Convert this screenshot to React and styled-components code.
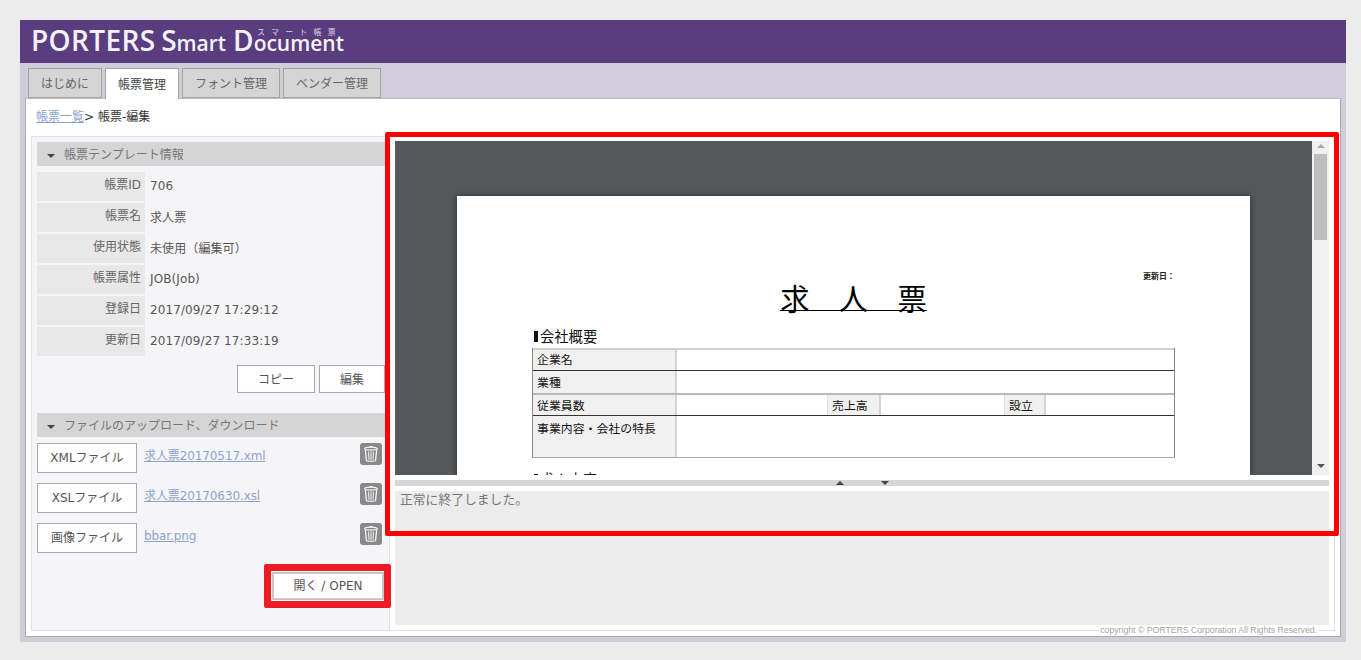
import React from "react";
import styled, { createGlobalStyle } from "styled-components";

const Global = createGlobalStyle`
  html, body { margin: 0; padding: 0; background: #ececec; }
  body { font-family: "DejaVu Sans", "Noto Sans CJK JP", sans-serif; font-size: 12px; color: #555; }
  * { box-sizing: border-box; }
`;

const Frame = styled.div`
  position: relative;
  width: 1326px;
  height: 622px;
  margin: 20px 15px 18px 20px;
  background: #d1ccd9;
  display: flex;
  flex-direction: column;
`;
const Header = styled.header`
  height: 43px;
  background: #5a3d7e;
  flex: none;
  display: flex;
  align-items: center;
  padding-left: 11px;
`;
const Logo = styled.div`
  position: relative;
  font-family: "Open Sans", sans-serif;
  font-weight: 600;
  color: #f4f2f7;
  font-size: 21px;
  line-height: 43px;
  white-space: nowrap;
  padding-top: 1px;
`;
const Cap = styled.span`
  font-size: 28px;
  letter-spacing: ${(p) => p.$ls || "0"};
  margin-left: ${(p) => p.$ml || 0}px;
`;
const LogoKana = styled.span`
  position: absolute;
  left: 226px;
  top: 8px;
  font-family: "Noto Sans CJK JP", sans-serif;
  font-size: 8px;
  font-weight: 400;
  line-height: 12px;
  letter-spacing: 6.2px;
  color: #d9d2e4;
`;
const TabBar = styled.nav`
  height: 35px;
  flex: none;
  display: flex;
  gap: 3px;
  padding: 5px 0 0 8px;
  position: relative;
  z-index: 1;
`;
const Tab = styled.div`
  width: ${(p) => p.$w}px;
  height: ${(p) => (p.$active ? 31 : 30)}px;
  display: flex;
  align-items: center;
  justify-content: center;
  padding-bottom: 2px;
  background: ${(p) => (p.$active ? "#fff" : "#d5d5d5")};
  border: 1px solid #a3a3a3;
  border-bottom: ${(p) => (p.$active ? "none" : "1px solid #a3a3a3")};
  color: ${(p) => (p.$active ? "#444" : "#666")};
`;
const Content = styled.main`
  margin: 0 5px;
  height: 539px;
  flex: none;
  background: #fff;
  border: 1px solid #aaa;
  border-top-color: #bbb;
  padding: 0 5px;
`;
const Crumb = styled.div`
  height: 37px;
  padding: 9px 0 0 5px;
  line-height: 18px;
  color: #333;
`;
const CrumbLink = styled.a`
  color: #8da3cf;
  text-decoration: underline;
`;
const Panel = styled.div`
  position: relative;
  width: 1304px;
  height: 495px;
  border: 1px solid #e0e0e8;
  display: flex;
`;
const LeftPane = styled.aside`
  width: 358px;
  flex: none;
  background: #f5f5f8;
  border-right: 1px solid #dedee4;
  padding: 5px 4px 0 5px;
  display: flex;
  flex-direction: column;
`;
const SectionHead = styled.div`
  height: 24px;
  width: 348px;
  flex: none;
  background: #d5d5d5;
  display: flex;
  align-items: center;
  color: #777;
  padding: 0 0 2px 9px;
  margin-top: ${(p) => p.$mt || 0}px;
`;
const Caret = styled.span`
  width: 0;
  height: 0;
  border-left: 4px solid transparent;
  border-right: 4px solid transparent;
  border-top: 4px solid #444;
  margin: 5px 9px 0 1px;
`;
const InfoList = styled.div`
  margin-top: 6px;
  display: flex;
  flex-direction: column;
  gap: 2px;
`;
const InfoRow = styled.div`
  height: 29px;
  display: flex;
  align-items: center;
`;
const InfoLabel = styled.div`
  width: 108px;
  height: 100%;
  background: #e8e8e8;
  text-align: right;
  padding-right: 4px;
  line-height: 27px;
  color: #666;
`;
const InfoValue = styled.div`
  padding: 0 0 2px 5px;
  color: #555;
  letter-spacing: 0.1px;
  white-space: nowrap;
`;
const Actions = styled.div`
  width: 348px;
  display: flex;
  justify-content: flex-end;
  gap: 4px;
  margin-top: 9px;
`;
const Btn = styled.button`
  width: ${(p) => p.$w}px;
  height: ${(p) => p.$h || 28}px;
  padding: 0 0 ${(p) => p.$pb || 2}px;
  background: #fff;
  border: 1px solid #aaa;
  font: inherit;
  color: #555;
`;
const FileRow = styled.div`
  width: 348px;
  height: 30px;
  display: flex;
  align-items: flex-start;
  margin-top: ${(p) => p.$mt}px;
`;
const FileLink = styled.a`
  margin-left: 7px;
  flex: 1;
  line-height: 26px;
  letter-spacing: -0.1px;
  color: #8da3cf;
  text-decoration: underline;
  white-space: nowrap;
`;
const TrashBtn = styled.div`
  width: 22px;
  height: 22px;
  margin-right: 3px;
  border-radius: 3px;
  background: #8a8a8a;
  display: flex;
  align-items: center;
  justify-content: center;
`;
const OpenRow = styled.div`
  width: 347px;
  display: flex;
  justify-content: flex-end;
  margin-top: 19px;
`;
const OpenBtn = styled.button`
  width: 112px;
  height: 28px;
  padding: 0 0 3px;
  background: #fff;
  border: 1px solid #c4c4c4;
  outline: 1px solid #ccc;
  outline-offset: -2px;
  font: inherit;
  color: #555;
`;
const RightPane = styled.section`
  flex: 1;
  min-width: 0;
  padding: 4px 0 0 5px;
  display: flex;
  flex-direction: column;
`;
const Viewer = styled.div`
  width: 934px;
  height: 334px;
  flex: none;
  display: flex;
  overflow: hidden;
`;
const Stage = styled.div`
  width: 917px;
  background: #54585b;
  padding: 55px 62px 0;
  overflow: hidden;
`;
const Sheet = styled.div`
  width: 793px;
  height: 600px;
  background: #fff;
  box-shadow: 0 0 6px rgba(0, 0, 0, 0.45);
  padding: 74px 75px 0;
  color: #111;
  font-family: "Noto Sans CJK JP", sans-serif;
`;
const SheetDate = styled.div`
  text-align: right;
  font-size: 8px;
  font-weight: 700;
  line-height: 12px;
  color: #222;
`;
const TitleWrap = styled.div`
  text-align: center;
  height: 44px;
`;
const SheetTitle = styled.h1`
  display: inline-block;
  margin: -2px 0 0;
  font-size: 29.3px;
  font-weight: 400;
  line-height: 34px;
  height: 31px;
  border-bottom: 1px solid #000;
  color: #000;
`;
const SheetHeading = styled.div`
  display: flex;
  align-items: center;
  font-size: 14.3px;
  line-height: 20px;
  height: 20px;
  margin: ${(p) => p.$mt}px 0 2px 2px;
  color: #111;
`;
const HeadBar = styled.span`
  width: 4px;
  height: 11px;
  background: #111;
  margin-right: 2px;
`;
const SheetTable = styled.div`
  width: 643px;
  border-left: 1px solid #888;
  border-right: 1px solid #888;
  border-bottom: 1px solid #aaa;
`;
const SheetRow = styled.div`
  display: flex;
  height: ${(p) => p.$h}px;
  border-top: ${(p) => p.$t || 1}px solid ${(p) => p.$line};
`;
const SheetLabel = styled.div`
  width: ${(p) => p.$w}px;
  flex: none;
  background: #f0f0f0;
  border-right: 2px solid #d4d4d4;
  border-left: ${(p) => (p.$inner ? "1px solid #ddd" : "none")};
  padding: ${(p) => p.$pt || 0}px 0 0 4px;
  font-size: 11.9px;
  line-height: ${(p) => p.$lh || 21}px;
  color: #111;
  white-space: nowrap;
`;
const SheetCell = styled.div`
  width: ${(p) => (p.$w ? `${p.$w}px` : "auto")};
  flex: ${(p) => (p.$w ? "none" : "1")};
`;
const ScrollTrack = styled.div`
  width: 17px;
  flex: none;
  background: #f0f0f0;
  display: flex;
  flex-direction: column;
  align-items: center;
  padding-top: 3px;
`;
const Thumb = styled.div`
  width: 13px;
  height: 86px;
  background: #bebebe;
  margin-top: 6px;
`;
const Arrow = styled.span`
  width: 0;
  height: 0;
  border-left: 4px solid transparent;
  border-right: 4px solid transparent;
  ${(p) => (p.$up ? `border-bottom: 4px solid ${p.$c};` : `border-top: 4px solid ${p.$c};`)}
`;
const ScrollDown = styled(Arrow)`
  margin-top: auto;
  margin-bottom: 7px;
`;
const Splitter = styled.div`
  width: 934px;
  height: 6px;
  margin-top: 5px;
  flex: none;
  background: #d6d6d6;
  display: flex;
  align-items: flex-start;
  padding: 1px 0 0 441px;
  gap: 37px;
`;
const Message = styled.div`
  width: 934px;
  height: 134px;
  margin-top: 5px;
  flex: none;
  background: #ececec;
  padding: 0 0 0 5px;
  font-size: 12.8px;
  line-height: 18px;
  color: #777;
`;
const Copyright = styled.div`
  position: absolute;
  right: 16px;
  bottom: -5px;
  background: #fff;
  padding: 0 1px;
  font-family: "Liberation Sans", sans-serif;
  font-size: 8.7px;
  line-height: 10px;
  color: #a5a5a5;
  white-space: nowrap;
`;
const Highlight = styled.div`
  position: absolute;
  left: ${(p) => p.$x}px;
  top: ${(p) => p.$y}px;
  width: ${(p) => p.$w}px;
  height: ${(p) => p.$h}px;
  border: ${(p) => p.$b}px solid ${(p) => p.$c};
  border-radius: 2px;
  pointer-events: none;
`;

const TrashIcon = () => (
  <svg width="16" height="18" viewBox="0 0 16 18" fill="none" stroke="#f2f2f2" strokeLinecap="round">
    <path d="M6 2.2C6 1 10 1 10 2.2" strokeWidth="1" />
    <ellipse cx="8" cy="3.6" rx="6.3" ry="1.5" strokeWidth="1.3" />
    <path d="M2.4 5.4L3.4 15.4C3.6 16.6 12.4 16.6 12.6 15.4L13.6 5.4" strokeWidth="1.3" />
    <path d="M5.6 7L6 14.5M8 7V14.6M10.4 7L10 14.5" strokeWidth="1" />
  </svg>
);

const info = [
  ["帳票ID", "706"],
  ["帳票名", "求人票"],
  ["使用状態", "未使用（編集可）"],
  ["帳票属性", "JOB(Job)"],
  ["登録日", "2017/09/27 17:29:12"],
  ["更新日", "2017/09/27 17:33:19"],
];
const files = [
  ["XMLファイル", "求人票20170517.xml", 6],
  ["XSLファイル", "求人票20170630.xsl", 10],
  ["画像ファイル", "bbar.png", 10],
];

export default function App() {
  return (
    <>
      <Global />
      <Frame>
        <Header>
          <Logo>
            <Cap $ls="0.4px">PORTERS</Cap> <Cap>S</Cap>mart <Cap $ml={1.5}>D</Cap>ocument
            <LogoKana>スマート帳票</LogoKana>
          </Logo>
        </Header>
        <TabBar>
          <Tab $w={74}>はじめに</Tab>
          <Tab $w={74} $active>帳票管理</Tab>
          <Tab $w={98}>フォント管理</Tab>
          <Tab $w={98}>ベンダー管理</Tab>
        </TabBar>
        <Content>
          <Crumb>
            <CrumbLink>帳票一覧</CrumbLink>&gt; 帳票-編集
          </Crumb>
          <Panel>
            <LeftPane>
              <SectionHead><Caret />帳票テンプレート情報</SectionHead>
              <InfoList>
                {info.map(([k, v]) => (
                  <InfoRow key={k}>
                    <InfoLabel>{k}</InfoLabel>
                    <InfoValue>{v}</InfoValue>
                  </InfoRow>
                ))}
              </InfoList>
              <Actions>
                <Btn $w={78}>コピー</Btn>
                <Btn $w={66}>編集</Btn>
              </Actions>
              <SectionHead $mt={20}><Caret />ファイルのアップロード、ダウンロード</SectionHead>
              {files.map(([label, name, mt]) => (
                <FileRow key={label} $mt={mt}>
                  <Btn $w={100} $h={30} $pb={3}>{label}</Btn>
                  <FileLink>{name}</FileLink>
                  <TrashBtn><TrashIcon /></TrashBtn>
                </FileRow>
              ))}
              <OpenRow>
                <OpenBtn>開く / OPEN</OpenBtn>
              </OpenRow>
            </LeftPane>
            <RightPane>
              <Viewer>
                <Stage>
                  <Sheet>
                    <SheetDate>更新日：</SheetDate>
                    <TitleWrap><SheetTitle>求　人　票</SheetTitle></TitleWrap>
                    <SheetHeading $mt={0}><HeadBar />会社概要</SheetHeading>
                    <SheetTable>
                      <SheetRow $h={22} $t={2} $line="#d0d0d0">
                        <SheetLabel $w={144} $lh={17}>企業名</SheetLabel><SheetCell />
                      </SheetRow>
                      <SheetRow $h={23} $line="#333">
                        <SheetLabel $w={144}>業種</SheetLabel><SheetCell />
                      </SheetRow>
                      <SheetRow $h={22} $t={2} $line="#b8b8b8">
                        <SheetLabel $w={144} $lh={19}>従業員数</SheetLabel>
                        <SheetCell $w={150} />
                        <SheetLabel $w={54} $lh={19} $inner>売上高</SheetLabel>
                        <SheetCell $w={123} />
                        <SheetLabel $w={42} $lh={19} $inner>設立</SheetLabel>
                        <SheetCell />
                      </SheetRow>
                      <SheetRow $h={42} $line="#333">
                        <SheetLabel $w={144} $pt={3} $lh={18}>事業内容・会社の特長</SheetLabel><SheetCell />
                      </SheetRow>
                    </SheetTable>
                    <SheetHeading $mt={11}><HeadBar />求人内容</SheetHeading>
                  </Sheet>
                </Stage>
                <ScrollTrack>
                  <Arrow $up $c="#aaa" />
                  <Thumb />
                  <ScrollDown $c="#555" />
                </ScrollTrack>
              </Viewer>
              <Splitter>
                <Arrow $up $c="#444" />
                <Arrow $c="#444" />
              </Splitter>
              <Message>正常に終了しました。</Message>
            </RightPane>
            <Copyright>copyright © PORTERS Corporation All Rights Reserved.</Copyright>
          </Panel>
        </Content>
        <Highlight $x={365} $y={112} $w={954} $h={404} $b={5} $c="#ff0000" />
        <Highlight $x={244} $y={544} $w={127} $h={44} $b={7} $c="#ed1c24" />
      </Frame>
    </>
  );
}
